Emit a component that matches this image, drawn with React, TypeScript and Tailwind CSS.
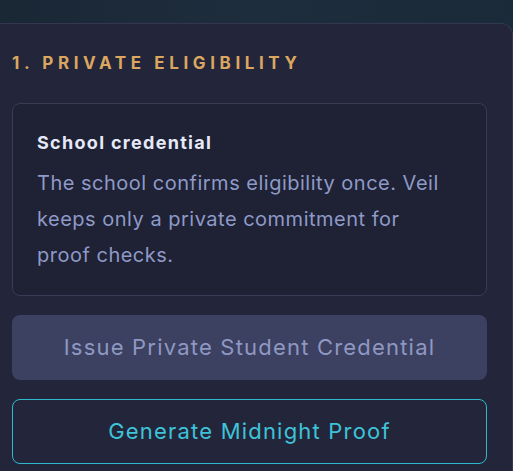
export default function App() {
  return (
    <div
      className="min-h-screen w-[513px] h-[471px] overflow-hidden bg-gradient-to-r from-[#1a2735] via-[#1e2d3d] to-[#1b2a38]"
      style={{ fontFamily: "Inter, 'Noto Sans', sans-serif" }}
    >
      <div className="mt-[23px] h-[460px] bg-[#23263a] border-t border-r border-[#333850] rounded-tr-[12px] pl-3 pr-[25px] pt-[26px]">
        <h2 className="text-[17px] font-bold tracking-[4.6px] text-[#dba760] leading-[26px] mb-[27px]">
          1. PRIVATE ELIGIBILITY
        </h2>

        <div className="rounded-[8px] border border-[#383c54] bg-[#1f2134] pl-6 pr-[34px] pt-[26px] pb-[22px]">
          <div className="text-[18px] font-bold tracking-[1.3px] text-[#e6e9f7] leading-[26px] mb-[9px]">
            School credential
          </div>
          <p className="text-[20px] leading-[36px] tracking-[0.5px] text-[#8e9ac8]">
            The school confirms eligibility once. Veil keeps only a private commitment for proof checks.
          </p>
        </div>

        <button className="mt-[19px] w-full h-[65px] rounded-[8px] bg-[#3c4161] text-[22px] tracking-[1.2px] text-[#8f98c2]">
          Issue Private Student Credential
        </button>

        <button className="mt-[19px] w-full h-[65px] rounded-[8px] border border-[#2eb8cc] bg-transparent text-[22px] tracking-[1.2px] text-[#3ec3d8]">
          Generate Midnight Proof
        </button>
      </div>
    </div>
  );
}
